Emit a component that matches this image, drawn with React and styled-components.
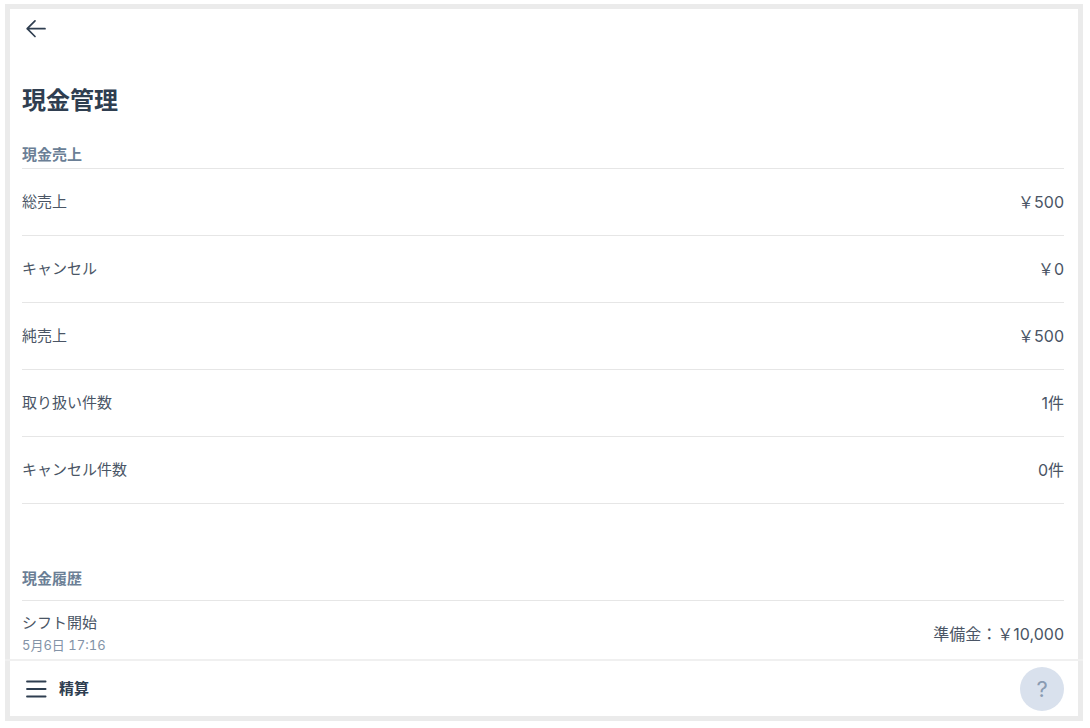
import React from 'react'
import styled, { createGlobalStyle } from 'styled-components'

const GlobalStyle = createGlobalStyle`
    * {
        box-sizing: border-box;
    }

    body {
        margin: 0;
        background: #ffffff;
        color: #4a5565;
        font-family: Inter, "Noto Sans CJK JP", sans-serif;
        font-size: 15px;
        line-height: 22px;
    }
`

const Frame = styled.div`
    display: flex;
    flex-direction: column;
    min-height: calc(100vh - 11px);
    margin: 4px 7px 7px 5px;
    border: 5px solid #ebebeb;
`

const Header = styled.header`
    display: flex;
    padding: 7px 14px;
`

const IconButton = styled.button`
    display: flex;
    align-items: center;
    padding: 0;
    border: none;
    background: none;
    color: #2f3e50;
    font: inherit;
    font-weight: 700;
    gap: 11px;
    cursor: pointer;
`

const Main = styled.main`
    flex: 1;
    padding: 0 14px 0 12px;
`

const Titulo = styled.h1`
    margin: 36px 0 25px;
    color: #2f3e50;
    font-size: 24px;
    font-weight: 700;
    line-height: 36px;
`

const Section = styled.section`
    margin-bottom: 64px;

    &:last-child {
        margin-bottom: 0;
    }
`

const SectionTitle = styled.h2`
    margin: 0;
    padding-bottom: ${props => props.$gap};
    border-bottom: 1px solid #e6e6e6;
    color: #6b7f96;
    font-size: 15px;
    font-weight: 700;
    line-height: 22px;
`

const List = styled.dl`
    margin: 0;
`

const Row = styled.div`
    display: flex;
    align-items: center;
    justify-content: space-between;
    height: 67px;
    border-bottom: 1px solid #e6e6e6;
`

const HistoryRow = styled(Row)`
    height: auto;
    padding: 11px 0 3px;
    border-bottom: none;
`

const Label = styled.dt`
    margin: 0;
`

const Value = styled.dd`
    margin: 0;
    font-size: 16px;
`

const Data = styled.time`
    display: block;
    color: #8393a7;
    font-size: 13px;
    font-variant-numeric: tabular-nums;
`

const Footer = styled.footer`
    display: flex;
    align-items: center;
    justify-content: space-between;
    height: 57px;
    margin: 0 -5px;
    padding: 0 19px;
    border-top: 2px solid #f0f0f0;
`

const HelpButton = styled.button`
    width: 44px;
    height: 44px;
    padding: 0;
    border: none;
    border-radius: 50%;
    background: #d9e1ed;
    color: #8a9bb2;
    font-family: inherit;
    font-size: 22px;
    cursor: pointer;
`

const vendas = [
    { label: '総売上', value: '￥500' },
    { label: 'キャンセル', value: '￥0' },
    { label: '純売上', value: '￥500' },
    { label: '取り扱い件数', value: '1件' },
    { label: 'キャンセル件数', value: '0件' }
]

const ArrowIcon = () => (
    <svg width="24" height="24" viewBox="0 0 24 24" fill="none" stroke="currentColor" strokeWidth="1.7" strokeLinecap="round" strokeLinejoin="round" aria-hidden="true">
        <path d="M21 12.7H3.2M11 4.9L3.2 12.7L11 20.5" />
    </svg>
)

const MenuIcon = () => (
    <svg width="24" height="24" viewBox="0 0 24 24" fill="none" stroke="currentColor" strokeWidth="1.8" strokeLinecap="round" aria-hidden="true">
        <path d="M3 4.5H21.6M3 12H21.6M3 19.5H21.6" />
    </svg>
)

const App = () => {
    return (
        <>
            <GlobalStyle />
            <Frame>
                <Header>
                    <IconButton type="button" aria-label="戻る">
                        <ArrowIcon />
                    </IconButton>
                </Header>

                <Main>
                    <Titulo>現金管理</Titulo>

                    <Section>
                        <SectionTitle $gap="2px">現金売上</SectionTitle>
                        <List>
                            {vendas.map(item => (
                                <Row key={item.label}>
                                    <Label>{item.label}</Label>
                                    <Value>{item.value}</Value>
                                </Row>
                            ))}
                        </List>
                    </Section>

                    <Section>
                        <SectionTitle $gap="10px">現金履歴</SectionTitle>
                        <List>
                            <HistoryRow>
                                <Label>
                                    シフト開始
                                    <Data dateTime="05-06T17:16">5月6日 17:16</Data>
                                </Label>
                                <Value>準備金：￥10,000</Value>
                            </HistoryRow>
                        </List>
                    </Section>
                </Main>

                <Footer>
                    <IconButton type="button">
                        <MenuIcon />
                        精算
                    </IconButton>
                    <HelpButton type="button" aria-label="ヘルプ">?</HelpButton>
                </Footer>
            </Frame>
        </>
    )
}

export default App
